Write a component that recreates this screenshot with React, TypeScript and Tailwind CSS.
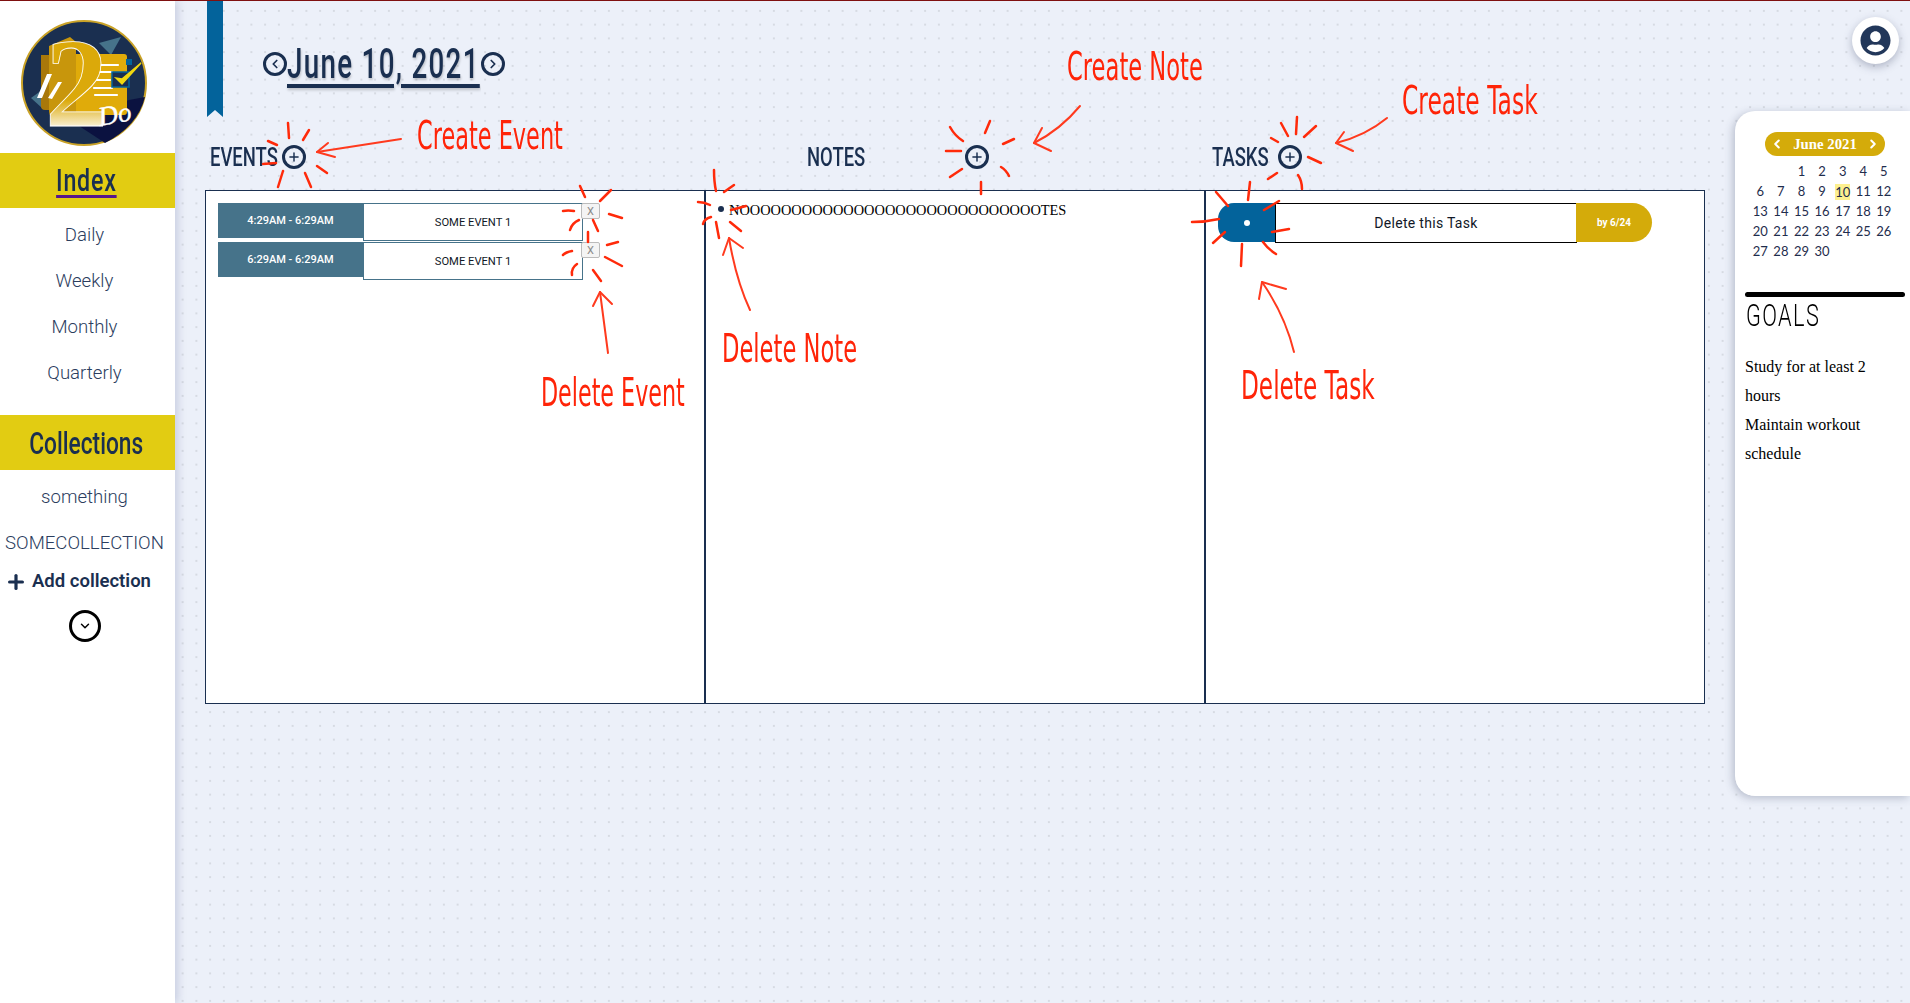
import { FaUserCircle } from 'react-icons/fa';
import { ChevronDown, ChevronLeft, ChevronRight, Plus } from 'lucide-react';

const sketchMarks = [
  // create event
  'M288 123l1 15', 'M309 130l-6 10', 'M268 141l9 4', 'M263 164l13-1', 'M283 171l-5 16', 'M305 173l6 14', 'M317 166l10 7',
  // delete event
  'M580 186l5 11', 'M611 190l-11 11', 'M563 211q5-1 11 0', 'M579 220q-7 3-9 10', 'M609 214l13 4', 'M593 220l5 11',
  'M588 232l0 10', 'M607 245l11-3', 'M563 255q3-3 9-4', 'M577 264q-6 4-5 11', 'M605 257l17 9', 'M593 270l8 11',
  // create note
  'M950 127q5 9 13 14', 'M990 121l-5 12', 'M1014 139l-11 5', 'M946 151l15 0', 'M962 169l-12 8', 'M1001 167q5 3 8 9', 'M981 182l0 12',
  // delete note
  'M714 170q0 12 2 21', 'M734 185l-10 7', 'M698 202q6 0 12 3', 'M711 217q-7 2-8 7', 'M716 222l3 16', 'M730 222l11 9', 'M731 210l15-4',
  // create task
  'M1281 123l7 13', 'M1297 117l-1 17', 'M1316 126l-12 11', 'M1271 138l7 4', 'M1308 157l13 6', 'M1277 173l-9 6', 'M1298 175q4 6 4 14',
  // delete task
  'M1216 192l12 14', 'M1250 182l-2 18', 'M1279 201l-15 9', 'M1192 222q14 0 27-3', 'M1289 229l-17 3', 'M1225 232l-12 11', 'M1242 244l-1 22', 'M1263 242q5 7 13 12',
];

const arrows = [
  'M401 139L317 152', 'M328 143L317 152L335 157',
  'M608 353L600 292', 'M593 306L600 292L612 304',
  'M1080 106Q1060 130 1034 143', 'M1042 128L1034 143L1051 151',
  'M750 310Q736 280 729 238', 'M723 255L729 238L743 248',
  'M1387 118Q1365 136 1336 143', 'M1344 132L1336 143L1353 151',
  'M1294 352Q1285 315 1262 282', 'M1259 299L1262 282L1286 289',
];

const notes = [
  { label: 'Create Event', pos: 'left-[417px] top-[113px] scale-x-[0.575]' },
  { label: 'Delete Event', pos: 'left-[541px] top-[370px] scale-x-[0.57]' },
  { label: 'Create Note', pos: 'left-[1067px] top-[44px] scale-x-[0.58]' },
  { label: 'Delete Note', pos: 'left-[722px] top-[326px] scale-x-[0.58]' },
  { label: 'Create Task', pos: 'left-[1402px] top-[78px] scale-x-[0.6]' },
  { label: 'Delete Task', pos: 'left-[1241px] top-[363px] scale-x-[0.595]' },
];

const days = Array.from({ length: 30 }, (_, i) => i + 1);

const Logo = () => (
  <svg viewBox="0 0 128 128" className="w-[128px] h-[128px] overflow-visible">
    <defs>
      <linearGradient id="two" x1="0" y1="0" x2="0" y2="1">
        <stop offset="0.62" stopColor="#dba90a" />
        <stop offset="0.85" stopColor="#ffffff" />
      </linearGradient>
    </defs>
    <circle cx="64" cy="63" r="62" fill="#1a2f50" stroke="#c9a227" strokeWidth="2" />
    <path d="M79 23L101 17L91 35z" fill="#46738a" />
    <path d="M11 78L22 70V88z" fill="#46738a" />
    <path d="M109 80L125 77Q118 106 85 123L50 100z" fill="#0b1240" />
    <path d="M21 35H29V90H25Q21 90 21 86z" fill="#a9780a" />
    <path d="M29 26L50 17L56 22V97H35Q29 97 29 91z" fill="#c8960c" />
    <path d="M56 34H104Q107 34 107 37V92Q107 95 104 95H56z" fill="#e0ab0a" />
    <rect x="106" y="39" width="6" height="6" fill="#03639b" />
    <path d="M78 45H98M78 52H92M76 60H90M74 68H92M75 75H97" stroke="#fff" strokeWidth="2.2" strokeLinecap="round" />
    <rect x="92" y="52" width="17" height="15" fill="#1a2f50" stroke="#03639b" strokeWidth="1.5" />
    <path d="M96 58L102 64L121 43L102 59z" fill="#f1d80f" stroke="#f1d80f" strokeWidth="1.5" />
    <path d="M17 78L27 54H32L22 78zM28 78L38 62H42L32 79z" fill="#fff" />
    <text x="25" y="106" fontFamily="'Liberation Serif', serif" fontWeight="700" fontSize="126" fill="url(#two)" stroke="#fff" strokeWidth="0.8">2</text>
    <text x="80" y="106" fontFamily="'Liberation Serif', serif" fontStyle="italic" fontSize="27" fill="#fff" stroke="#fff" strokeWidth="0.4" transform="rotate(-10 80 106)">Do</text>
  </svg>
);

const RoundIcon = ({ children, className }: { children: React.ReactNode; className?: string }) => (
  <span className={`flex items-center justify-center w-[24px] h-[24px] rounded-full border-[3px] border-[#1a2f50] text-[#1a2f50] shrink-0 ${className ?? ''}`}>
    {children}
  </span>
);

const SideLink = ({ label }: { label: string }) => (
  <a className="block h-[46px] leading-[46px] pr-[6px] text-center text-[18.6px] font-light text-[#2b3d5e]">{label}</a>
);

const Heading = ({ label, width }: { label: string; width: string }) => (
  <div className={`${width} shrink-0`}>
    <h2 className="inline-block origin-left scale-x-[0.71] whitespace-nowrap text-[26px] leading-[30px] font-medium uppercase text-[#1a2f50]">{label}</h2>
  </div>
);

const EventRow = ({ time }: { time: string }) => (
  <div className="relative flex items-start h-[39px]">
    <div className="w-[145px] h-[35px] bg-[#46738a] text-white text-[11px] font-medium flex items-center justify-center pt-[1px]">{time}</div>
    <div className="w-[220px] h-[38px] border border-[#46738a] flex items-center justify-center pt-[2px] text-[11.2px] text-[#111827]">SOME EVENT 1</div>
    <button className="absolute left-[363px] top-0 w-[19px] h-[16px] bg-[#f4f4f4] border border-[#bbbbbb] rounded-[2px] text-[#8a8a8a] text-[11px] leading-[13px]">X</button>
  </div>
);

export default function App() {
  return (
    <div className="relative flex h-[1003px] overflow-hidden border-t border-[#7f1010] bg-[#ecf0f9] bg-[radial-gradient(#d6dae2_0.7px,transparent_1px)] bg-[size:13.75px_13.75px] bg-[position:-3px_3px] font-['Roboto',sans-serif]">
      {/* Sidebar */}
      <aside className="w-[175px] shrink-0 bg-white shadow-[3px_0_8px_rgba(120,130,170,0.3)] z-10">
        <div className="flex justify-center pr-[7px] pt-[19px] h-[152px]">
          <Logo />
        </div>
        <div className="h-[55px] bg-[#e2cc12] flex items-center justify-center pr-[3px]">
          <span className="inline-block scale-x-[0.75] text-[31px] leading-[36px] font-medium tracking-[1px] text-[#1a2f50] underline decoration-[#56168c] decoration-[3px] underline-offset-[4px]">Index</span>
        </div>
        <nav className="pt-[4px]">
          <SideLink label="Daily" />
          <SideLink label="Weekly" />
          <SideLink label="Monthly" />
          <SideLink label="Quarterly" />
        </nav>
        <div className="mt-[19px] h-[55px] bg-[#e2cc12] flex items-center justify-center pr-[3px]">
          <span className="inline-block scale-x-[0.71] text-[32px] leading-[36px] font-medium text-[#1a2f50]">Collections</span>
        </div>
        <div className="pt-[4px]">
          <SideLink label="something" />
          <SideLink label="SOMECOLLECTION" />
        </div>
        <div className="flex items-center pl-[5px] gap-[5px] h-[32px] text-[18.5px] font-semibold text-[#1a2f50]">
          <Plus className="w-[22px] h-[22px]" strokeWidth={3.5} />
          <span>Add collection</span>
        </div>
        <div className="flex justify-center pr-[6px] mt-[12px]">
          <span className="flex items-center justify-center w-[32px] h-[32px] rounded-full border-[3px] border-black">
            <ChevronDown className="w-[14px] h-[14px]" strokeWidth={2.5} />
          </span>
        </div>
      </aside>

      {/* Main */}
      <main className="relative w-[1560px] shrink-0 pl-[30px]">
        <div className="absolute left-[32px] top-0 w-[16px] h-[116px] bg-[#03639b] [clip-path:polygon(0_0,100%_0,100%_100%,50%_94%,0_100%)]" />
        <div className="flex items-center pl-[58px] mt-[43px] h-[40px]">
          <RoundIcon><ChevronLeft className="w-[14px] h-[14px]" strokeWidth={3} /></RoundIcon>
          <div className="w-[194px] shrink-0">
            <h1 className="inline-block origin-left scale-x-[0.66] whitespace-nowrap text-[42px] leading-[40px] font-medium tracking-[2px] text-[#1a2f50] underline decoration-[4px] underline-offset-[6px] [text-shadow:1px_2px_3px_rgba(0,0,0,0.2)]">June 10, 2021</h1>
          </div>
          <RoundIcon><ChevronRight className="w-[14px] h-[14px]" strokeWidth={3} /></RoundIcon>
        </div>

        <div className="grid grid-cols-3 w-[1500px] h-[48px] items-start mt-[58px]">
          <div className="flex items-center pl-[5px] gap-[5px] h-[30px]">
            <Heading label="Events" width="w-[67px]" />
            <RoundIcon><Plus className="w-[14px] h-[14px]" strokeWidth={2.5} /></RoundIcon>
          </div>
          <div className="flex items-center pl-[102px] gap-[100px] h-[30px]">
            <Heading label="Notes" width="w-[58px]" />
            <RoundIcon><Plus className="w-[14px] h-[14px]" strokeWidth={2.5} /></RoundIcon>
          </div>
          <div className="flex items-center pl-[7px] gap-[8px] h-[30px]">
            <Heading label="Tasks" width="w-[58px]" />
            <RoundIcon><Plus className="w-[14px] h-[14px]" strokeWidth={2.5} /></RoundIcon>
          </div>
        </div>

        <div className="grid grid-cols-[500px_500px_1fr] w-[1500px] h-[514px] bg-white border border-[#1a2f50] divide-x-2 divide-[#1a2f50]">
          <section className="pl-[12px] pt-[12px]">
            <EventRow time="4:29AM - 6:29AM" />
            <EventRow time="6:29AM - 6:29AM" />
          </section>
          <section className="flex items-start pl-[12px] pt-[10px] gap-[5px]">
            <span className="w-[6px] h-[6px] rounded-full bg-[#1a2f50] mt-[5px]" />
            <p className="text-[14.4px] leading-[18px] text-black font-['Liberation_Serif',serif]">NOOOOOOOOOOOOOOOOOOOOOOOOOOOOOTES</p>
          </section>
          <section className="pl-[12px] pt-[12px]">
            <div className="flex items-start">
              <div className="w-[57px] h-[39px] bg-[#03639b] rounded-l-[16px] flex items-center justify-center">
                <span className="w-[6px] h-[6px] rounded-full bg-white" />
              </div>
              <div className="w-[302px] h-[40px] border border-black flex items-center justify-center text-[14px] tracking-[0.3px] text-[#111827]">Delete this Task</div>
              <div className="w-[76px] h-[39px] -ml-[1px] bg-[#d4ab0a] rounded-r-[20px] flex items-center justify-center text-[10px] font-bold text-white">by 6/24</div>
            </div>
          </section>
        </div>
      </main>

      {/* Right rail */}
      <div className="relative w-[175px] shrink-0">
        <div className="flex justify-end pr-[11px] pt-[16px] h-[110px]">
          <span className="flex items-center justify-center w-[47px] h-[47px] rounded-full bg-white shadow-[0_3px_8px_rgba(60,70,100,0.35)]">
            <FaUserCircle className="w-[31px] h-[31px] text-[#22375a]" />
          </span>
        </div>
        <aside className="h-[685px] bg-white rounded-l-[20px] shadow-[-2px_2px_8px_rgba(60,70,100,0.3)] pt-[21px]">
          <div className="ml-[30px] w-[120px] h-[24px] rounded-full bg-[#d4ab0a] flex items-center justify-between px-[5px] text-white font-['Liberation_Serif',serif] font-bold text-[14.8px]">
            <ChevronLeft className="w-[14px] h-[14px]" strokeWidth={3.5} />
            <span>June 2021</span>
            <ChevronRight className="w-[14px] h-[14px]" strokeWidth={3.5} />
          </div>
          <div className="ml-[15px] mt-[6px] grid grid-cols-[repeat(7,20.6px)] auto-rows-[20px] text-[13px] text-[#1f2d4d] font-['Lato',sans-serif] text-center">
            <span className="col-span-2" />
            {days.map((d) => (
              <span key={d} className="flex items-center justify-center">
                <span className={d === 10 ? 'bg-[#fdf08f] w-[15px] h-[16px] leading-[16px]' : ''}>{d}</span>
              </span>
            ))}
          </div>
          <div className="ml-[10px] mr-[5px] mt-[30px] h-[5px] rounded-full bg-black" />
          <div className="ml-[11px] mt-[1px]">
            <h2 className="inline-block origin-left scale-x-[0.7] whitespace-nowrap text-[31px] leading-[36px] font-light tracking-[2px] uppercase text-black">Goals</h2>
          </div>
          <div className="ml-[10px] mt-[18px] w-[150px] text-[16px] leading-[29px] text-black font-['Liberation_Serif',serif]">
            <p>Study for at least 2 hours</p>
            <p>Maintain workout schedule</p>
          </div>
        </aside>
      </div>

      {/* Red annotations drawn over the screenshot */}
      <svg className="absolute inset-0 w-[1910px] h-[1003px] z-20 pointer-events-none -top-[1px]" viewBox="0 0 1910 1003" fill="none" strokeLinecap="round" strokeLinejoin="round">
        {sketchMarks.map((d) => (
          <path key={d} d={d} stroke="#ff2a0a" strokeWidth="2.5" />
        ))}
        {arrows.map((d) => (
          <path key={d} d={d} stroke="#ff3a1e" strokeWidth="2" />
        ))}
      </svg>
      {notes.map((n) => (
        <span key={n.label} className={`absolute z-20 origin-left whitespace-nowrap text-[39px] leading-[44px] text-[#ff2408] font-['DejaVu_Sans',sans-serif] ${n.pos}`}>
          {n.label}
        </span>
      ))}
    </div>
  );
}
